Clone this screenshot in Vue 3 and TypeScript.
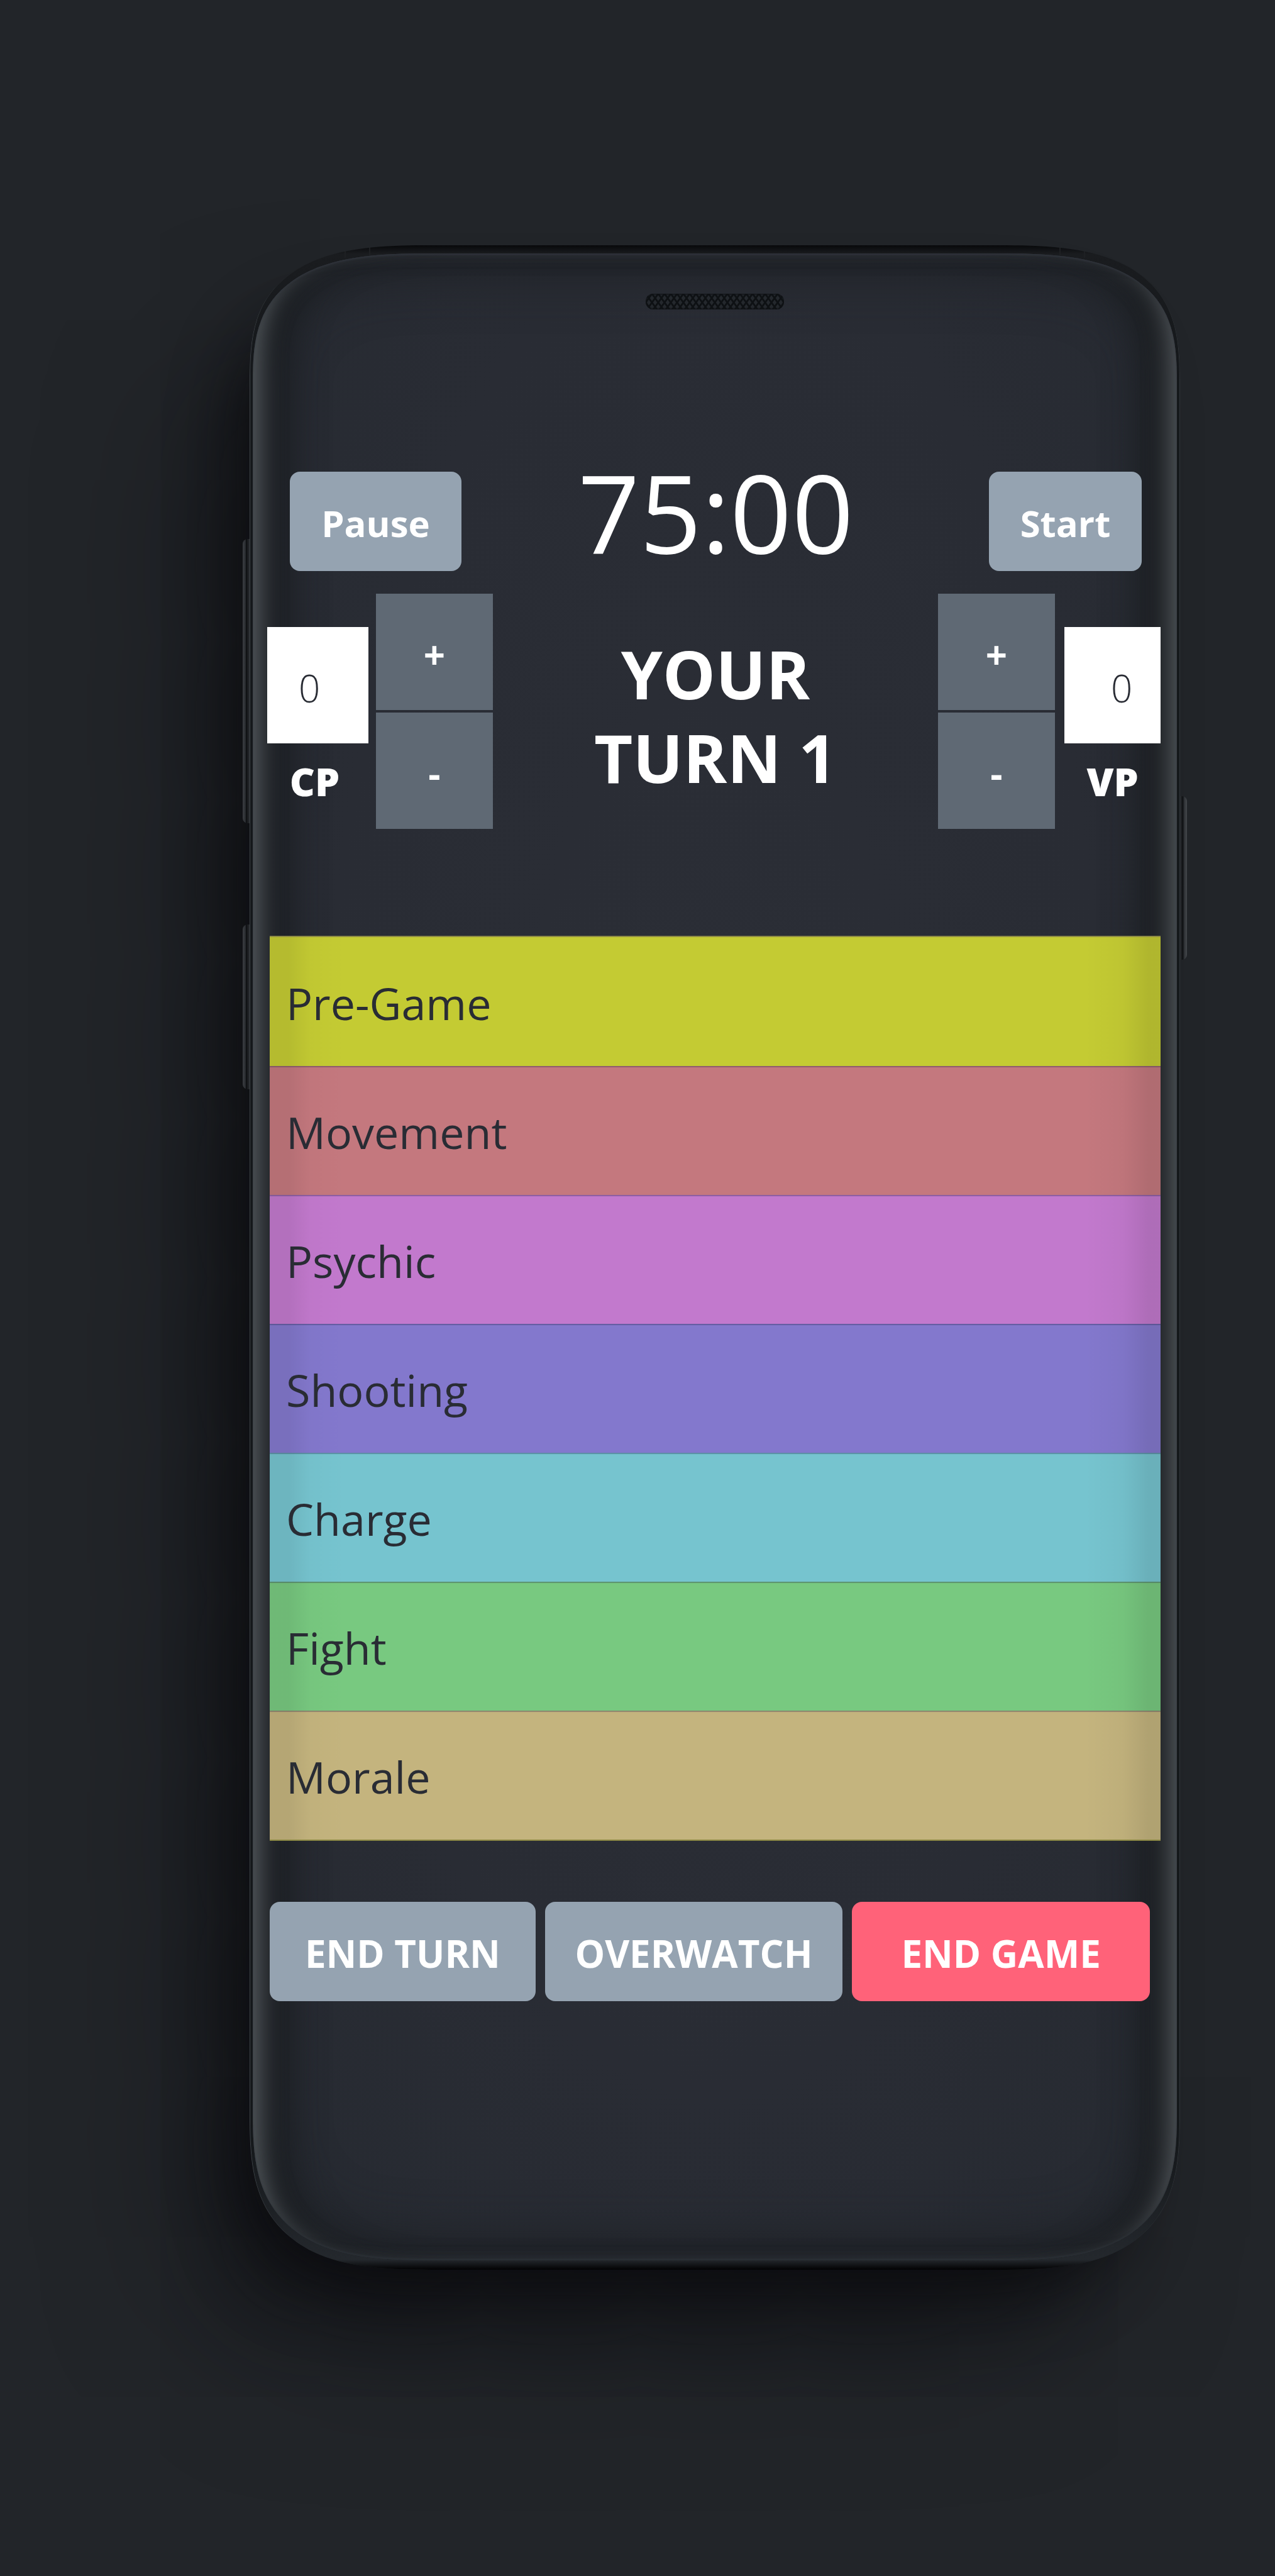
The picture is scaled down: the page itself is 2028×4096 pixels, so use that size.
<script setup lang="ts">
import { computed, ref } from 'vue'

interface Phase {
  name: string
  color: string
}

const phases: Phase[] = [
  { name: 'Pre-Game', color: '#c4cb33' },
  { name: 'Movement', color: '#c4787e' },
  { name: 'Psychic', color: '#c279cd' },
  { name: 'Shooting', color: '#8378cd' },
  { name: 'Charge', color: '#76c4cf' },
  { name: 'Fight', color: '#78c980' },
  { name: 'Morale', color: '#c4b47e' },
]

const seconds = ref(75 * 60)
const turn = ref(1)
const command = ref(0)
const victory = ref(0)

const clock = computed(() => {
  const m = String(Math.floor(seconds.value / 60)).padStart(2, '0')
  const s = String(seconds.value % 60).padStart(2, '0')
  return `${m}:${s}`
})

let timer: number | undefined

function start() {
  if (timer === undefined) {
    timer = window.setInterval(() => {
      seconds.value = Math.max(0, seconds.value - 1)
    }, 1000)
  }
}

function pause() {
  window.clearInterval(timer)
  timer = undefined
}

function endGame() {
  pause()
  seconds.value = 75 * 60
  turn.value = 1
}
</script>

<template>
  <main class="page">
    <div class="phone">
      <span class="key key-volume"></span>
      <span class="key key-assist"></span>
      <span class="key key-power"></span>
      <div class="glass"></div>

      <div class="speaker">
        <svg width="100%" height="100%" aria-hidden="true">
          <defs>
            <pattern id="mesh" width="10" height="14" patternUnits="userSpaceOnUse">
              <path d="M0 0L10 14M10 0L0 14" stroke="#0e1114" stroke-width="3" />
            </pattern>
          </defs>
          <rect width="100%" height="100%" fill="url(#mesh)" />
        </svg>
      </div>

      <section class="screen">
        <header class="clock-row">
          <button type="button" class="btn" @click="pause">Pause</button>
          <time class="clock">{{ clock }}</time>
          <button type="button" class="btn btn-start" @click="start">Start</button>
        </header>

        <div class="score-row">
          <div class="counter">
            <div class="points points-cp">
              <input id="cp" v-model="command" type="text" inputmode="numeric" />
              <label for="cp">CP</label>
            </div>
            <div class="steps">
              <button type="button" aria-label="Add command point" @click="command++">+</button>
              <button type="button" aria-label="Remove command point" @click="command--">-</button>
            </div>
          </div>
          <h1 class="turn">YOUR<br />TURN {{ turn }}</h1>
          <div class="counter counter-vp">
            <div class="steps">
              <button type="button" aria-label="Add victory point" @click="victory++">+</button>
              <button type="button" aria-label="Remove victory point" @click="victory--">-</button>
            </div>
            <div class="points points-vp">
              <input id="vp" v-model="victory" type="text" inputmode="numeric" />
              <label for="vp">VP</label>
            </div>
          </div>
        </div>

        <ul class="phases">
          <li v-for="p in phases" :key="p.name" :style="{ backgroundColor: p.color }">{{ p.name }}</li>
        </ul>

        <footer class="actions">
          <button type="button" class="btn act-turn" @click="turn++">END TURN</button>
          <button type="button" class="btn act-wide">OVERWATCH</button>
          <button type="button" class="btn act-wide btn-danger" @click="endGame">END GAME</button>
        </footer>
      </section>
    </div>
  </main>
</template>

<style>
body {
  margin: 0;
  background: #222529;
}
</style>

<style scoped>
.page {
  box-sizing: border-box;
  min-height: 100vh;
  padding: 390px 151px 487px 397px;
  overflow: hidden;
  background: #222529;
  font-family: "Open Sans", "Noto Sans", sans-serif;
  color: #fff;
}

.phone {
  position: relative;
  box-sizing: border-box;
  padding: 77px 0 427px;
  border-radius: 210px 210px 210px 210px / 170px 170px 190px 190px;
  background:
    linear-gradient(#1e2023, #1e2023) 151px 0 / 2px 20px no-repeat,
    linear-gradient(#1e2023, #1e2023) 190px 0 / 2px 20px no-repeat,
    linear-gradient(#1e2023, #1e2023) right 151px top 0 / 2px 20px no-repeat,
    linear-gradient(#1e2023, #1e2023) right 190px top 0 / 2px 20px no-repeat,
    linear-gradient(180deg, #08090b 0, #1a1c1f 14px, #15181b 200px, #15181b calc(100% - 200px), #24282d calc(100% - 16px), #020203 100%);
  box-shadow:
    inset 2px 0 1px -1px #41464b,
    inset -2px 0 1px -1px #34383c,
    -50px 70px 100px -30px rgba(8, 8, 11, 0.75),
    -120px 150px 220px -30px rgba(8, 8, 12, 0.5);
}

.glass {
  position: absolute;
  inset: 13px 5px 15px;
  border-radius: 205px 205px 205px 205px / 160px 160px 180px 180px;
  background: radial-gradient(ellipse at 50% 45%, #2b2e36 0, #292c34 60%, #262a31 100%);
  box-shadow:
    inset 0 3px 3px -1px #30343c,
    inset 0 -3px 3px -1px #2b3036,
    inset 34px 0 40px -24px #5c6266,
    inset -34px 0 40px -24px #585d62,
    inset 86px 0 60px -36px #1a1d21,
    inset -86px 0 60px -36px #1a1d20,
    inset 0 0 90px 20px #1c1f23;
}

/* The body's corners ease into the sides more gently than an ellipse does. */
@supports (corner-shape: superellipse(1.5)) {
  .phone {
    corner-shape: superellipse(1.5);
    border-radius: 290px 290px 290px 290px / 215px 215px 245px 245px;
  }

  .glass {
    corner-shape: superellipse(1.5);
    border-radius: 285px 285px 285px 285px / 205px 205px 235px 235px;
  }
}

.key {
  position: absolute;
  width: 11px;
  box-sizing: border-box;
  background: linear-gradient(90deg, #3a3d41, #2a2d31 40%, #0e1012 50%, #2a2d31);
}

.key-volume {
  left: -11px;
  top: 467px;
  height: 452px;
  border-radius: 8px 0 0 8px;
}

.key-assist {
  left: -11px;
  top: 1080px;
  height: 262px;
  border-radius: 8px 0 0 8px;
}

.key-power {
  right: -11px;
  top: 876px;
  height: 260px;
  border-radius: 0 8px 8px 0;
  background: linear-gradient(90deg, #2a2d31, #0e1012 40%, #2e3135 60%, #44484c);
}

.speaker {
  position: relative;
  width: 220px;
  height: 25px;
  margin: 0 auto;
  border-radius: 12px;
  overflow: hidden;
  background: #24282d;
  box-shadow: inset 0 0 3px 1px #0c0e11;
}

.speaker svg {
  display: block;
}

.screen {
  position: relative;
  padding-top: 258px;
}

.clock-row {
  display: grid;
  grid-template-columns: 1fr auto 1fr;
  align-items: start;
  height: 158px;
  padding: 0 61px 0 64px;
}

.btn {
  box-sizing: border-box;
  height: 158px;
  width: 273px;
  padding: 6px 0 0;
  border: 0;
  border-radius: 16px;
  background: #95a3b1;
  color: #fff;
  font: 700 58px/80px "Open Sans", "Noto Sans", sans-serif;
}

.btn-start {
  width: 243px;
  justify-self: end;
}

.clock {
  font-size: 172px;
  line-height: 126px;
}

.score-row {
  display: flex;
  justify-content: space-between;
  align-items: flex-start;
  padding: 0 31px 0 28px;
  margin-top: 36px;
}

.counter {
  display: flex;
  gap: 12px;
}

.counter-vp {
  gap: 15px;
}

.points {
  display: flex;
  flex-direction: column;
  align-items: center;
  padding-top: 53px;
}

.points input {
  box-sizing: border-box;
  width: 100%;
  height: 185px;
  border: 0;
  border-radius: 0;
  background: #fff;
  color: #292c34;
  font: 300 60px/80px "Open Sans", "Noto Sans", sans-serif;
}

.points-cp {
  width: 161px;
}

.points-cp input {
  padding: 8px 0 0 50px;
}

.points-cp label {
  padding-right: 10px;
}

.points-vp {
  width: 153px;
}

.points-vp input {
  padding: 8px 0 0 74px;
}

.points label {
  font-size: 62px;
  font-weight: 800;
  line-height: 80px;
  margin-top: 20px;
}

.steps {
  display: flex;
  flex-direction: column;
  gap: 4px;
}

.steps button {
  width: 186px;
  height: 185px;
  padding: 8px 0 0;
  border: 0;
  background: #5f6974;
  color: #fff;
  font: 700 60px/80px "Open Sans", "Noto Sans", sans-serif;
}

.turn {
  margin: 0;
  padding-top: 61px;
  font-size: 106px;
  font-weight: 700;
  line-height: 133px;
  text-align: center;
}

.phases {
  list-style: none;
  margin: 170px 31px 0 32px;
  padding: 0;
  border: 2px solid #8e8b45;
  border-width: 2px 0;
}

.phases li {
  box-sizing: border-box;
  height: 205px;
  padding: 5px 26px 0;
  background-image: linear-gradient(90deg, rgba(0, 0, 0, 0.08) 0, rgba(0, 0, 0, 0.08) 30px, rgba(0, 0, 0, 0.02) 64px, transparent 120px, transparent calc(100% - 120px), rgba(0, 0, 0, 0.03) calc(100% - 60px), rgba(0, 0, 0, 0.1) calc(100% - 20px), rgba(0, 0, 0, 0.1) 100%);
  color: #292c34;
  font-size: 70px;
  line-height: 200px;
}

.phases li + li {
  box-shadow: inset 0 2px 1px rgba(40, 44, 80, 0.35);
}

.actions {
  display: flex;
  gap: 15px;
  margin-top: 97px;
  padding: 0 48px 0 32px;
}

.actions .btn {
  font-size: 60px;
}

.act-turn {
  flex: 423 1 0;
}

.act-wide {
  flex: 474 1 0;
}

.btn-danger {
  background: #ff6279;
}
</style>
